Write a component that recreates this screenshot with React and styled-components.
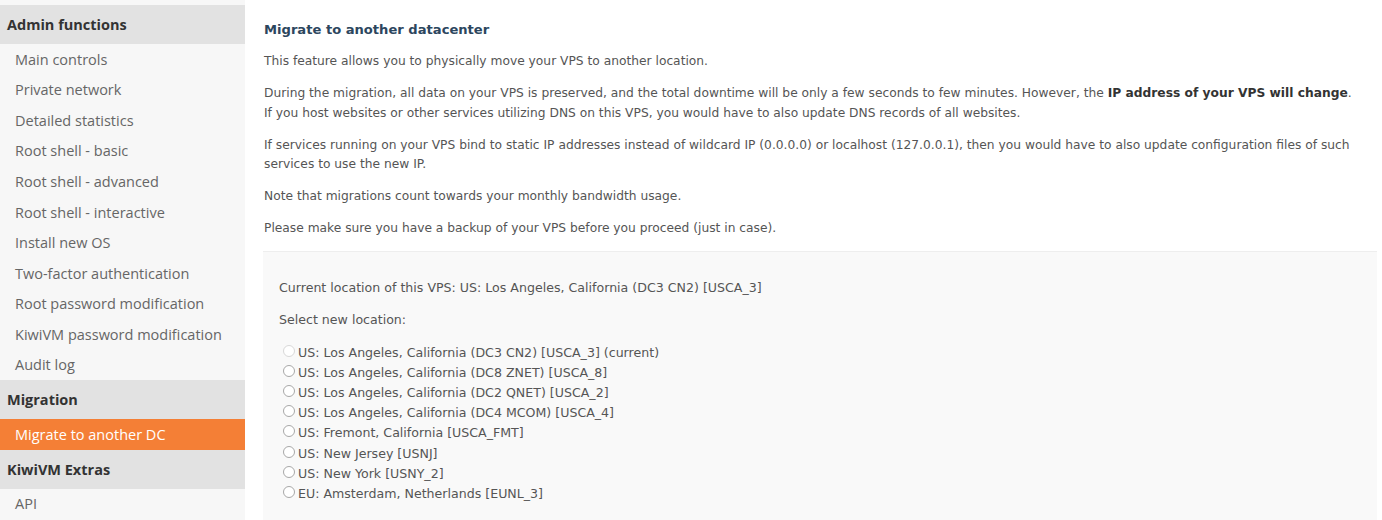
import React from 'react';
import styled, { createGlobalStyle } from 'styled-components';

const GlobalStyle = createGlobalStyle`
  html, body { margin: 0; padding: 0; background: #ffffff; }
  body { overflow: hidden; }
`

const Page = styled.div`
  display: flex;
  width: 1382px;
  height: 520px;
  overflow: hidden;
`
const Sidebar = styled.nav`
  width: 245px;
  flex-shrink: 0;
  background: #f7f7f7;
  padding-top: 5px;
  font-family: 'Open Sans', 'Noto Sans', sans-serif;
  font-size: 14.5px;
`
const SideHeader = styled.div`
  height: 39px;
  display: flex;
  align-items: center;
  padding-left: 7px;
  background: #e2e2e2;
  color: #333;
  font-weight: 700;
`
const SideItem = styled.div`
  height: 30.55px;
  display: flex;
  align-items: center;
  padding-left: 15px;
  color: ${p => (p.$active ? '#fff' : '#666')};
  background: ${p => (p.$active ? '#f47f36' : 'transparent')};
`
const Main = styled.main`
  flex: 1;
  padding: 20px 5px 0 19px;
  font-family: 'DejaVu Sans', Verdana, sans-serif;
  font-size: 12.25px;
  color: #555;
`
const Title = styled.h2`
  margin: 0 0 12px;
  font-size: 13.1px;
  font-weight: 700;
  color: #2c465e;
  line-height: 20px;
`
const Para = styled.p`
  margin: 0 0 12.5px;
  line-height: 19.5px;
  padding-right: 20px;
`
const Strong = styled.strong`
  color: #333;
`
const LocationBox = styled.div`
  margin-top: 7px;
  margin-left: -1px;
  background: #f9f9f9;
  border-top: 1px solid #eeeeee;
  padding: 26px 16px 20px;
  font-size: 12.6px;
`
const BoxLine = styled.div`
  line-height: 20px;
  margin-bottom: 12px;
`
const RadioList = styled.div`
  display: flex;
  flex-direction: column;
`
const RadioRow = styled.label`
  display: flex;
  align-items: center;
  height: 20.2px;
  padding-left: 4px;
`
const Circle = styled.span`
  width: 10px;
  height: 10px;
  border-radius: 50%;
  border: 1px solid ${p => (p.$disabled ? '#d8d8d8' : '#a8a8a8')};
  background: #fff;
  margin-right: 3px;
  margin-top: -3px;
  flex-shrink: 0;
`

const adminItems = [
  'Main controls',
  'Private network',
  'Detailed statistics',
  'Root shell - basic',
  'Root shell - advanced',
  'Root shell - interactive',
  'Install new OS',
  'Two-factor authentication',
  'Root password modification',
  'KiwiVM password modification',
  'Audit log',
]

const locations = [
  'US: Los Angeles, California (DC3 CN2) [USCA_3] (current)',
  'US: Los Angeles, California (DC8 ZNET) [USCA_8]',
  'US: Los Angeles, California (DC2 QNET) [USCA_2]',
  'US: Los Angeles, California (DC4 MCOM) [USCA_4]',
  'US: Fremont, California [USCA_FMT]',
  'US: New Jersey [USNJ]',
  'US: New York [USNY_2]',
  'EU: Amsterdam, Netherlands [EUNL_3]',
]

export default function App() {
  return (
    <>
      <GlobalStyle />
      <Page>
        <Sidebar>
          <SideHeader>Admin functions</SideHeader>
          {adminItems.map(item => <SideItem key={item}>{item}</SideItem>)}
          <SideHeader>Migration</SideHeader>
          <SideItem $active>Migrate to another DC</SideItem>
          <SideHeader>KiwiVM Extras</SideHeader>
          <SideItem>API</SideItem>
        </Sidebar>
        <Main>
          <Title>Migrate to another datacenter</Title>
          <Para>This feature allows you to physically move your VPS to another location.</Para>
          <Para>
            During the migration, all data on your VPS is preserved, and the total downtime will be only a few seconds to few minutes. However, the <Strong>IP address of your VPS will change</Strong>. If you host websites or other services utilizing DNS on this VPS, you would have to also update DNS records of all websites.
          </Para>
          <Para>
            If services running on your VPS bind to static IP addresses instead of wildcard IP (0.0.0.0) or localhost (127.0.0.1), then you would have to also update configuration files of such services to use the new IP.
          </Para>
          <Para>Note that migrations count towards your monthly bandwidth usage.</Para>
          <Para>Please make sure you have a backup of your VPS before you proceed (just in case).</Para>
          <LocationBox>
            <BoxLine>Current location of this VPS: US: Los Angeles, California (DC3 CN2) [USCA_3]</BoxLine>
            <BoxLine>Select new location:</BoxLine>
            <RadioList>
              {locations.map((loc, i) => (
                <RadioRow key={loc}>
                  <Circle $disabled={i === 0} />
                  {loc}
                </RadioRow>
              ))}
            </RadioList>
          </LocationBox>
        </Main>
      </Page>
    </>
  )
}
